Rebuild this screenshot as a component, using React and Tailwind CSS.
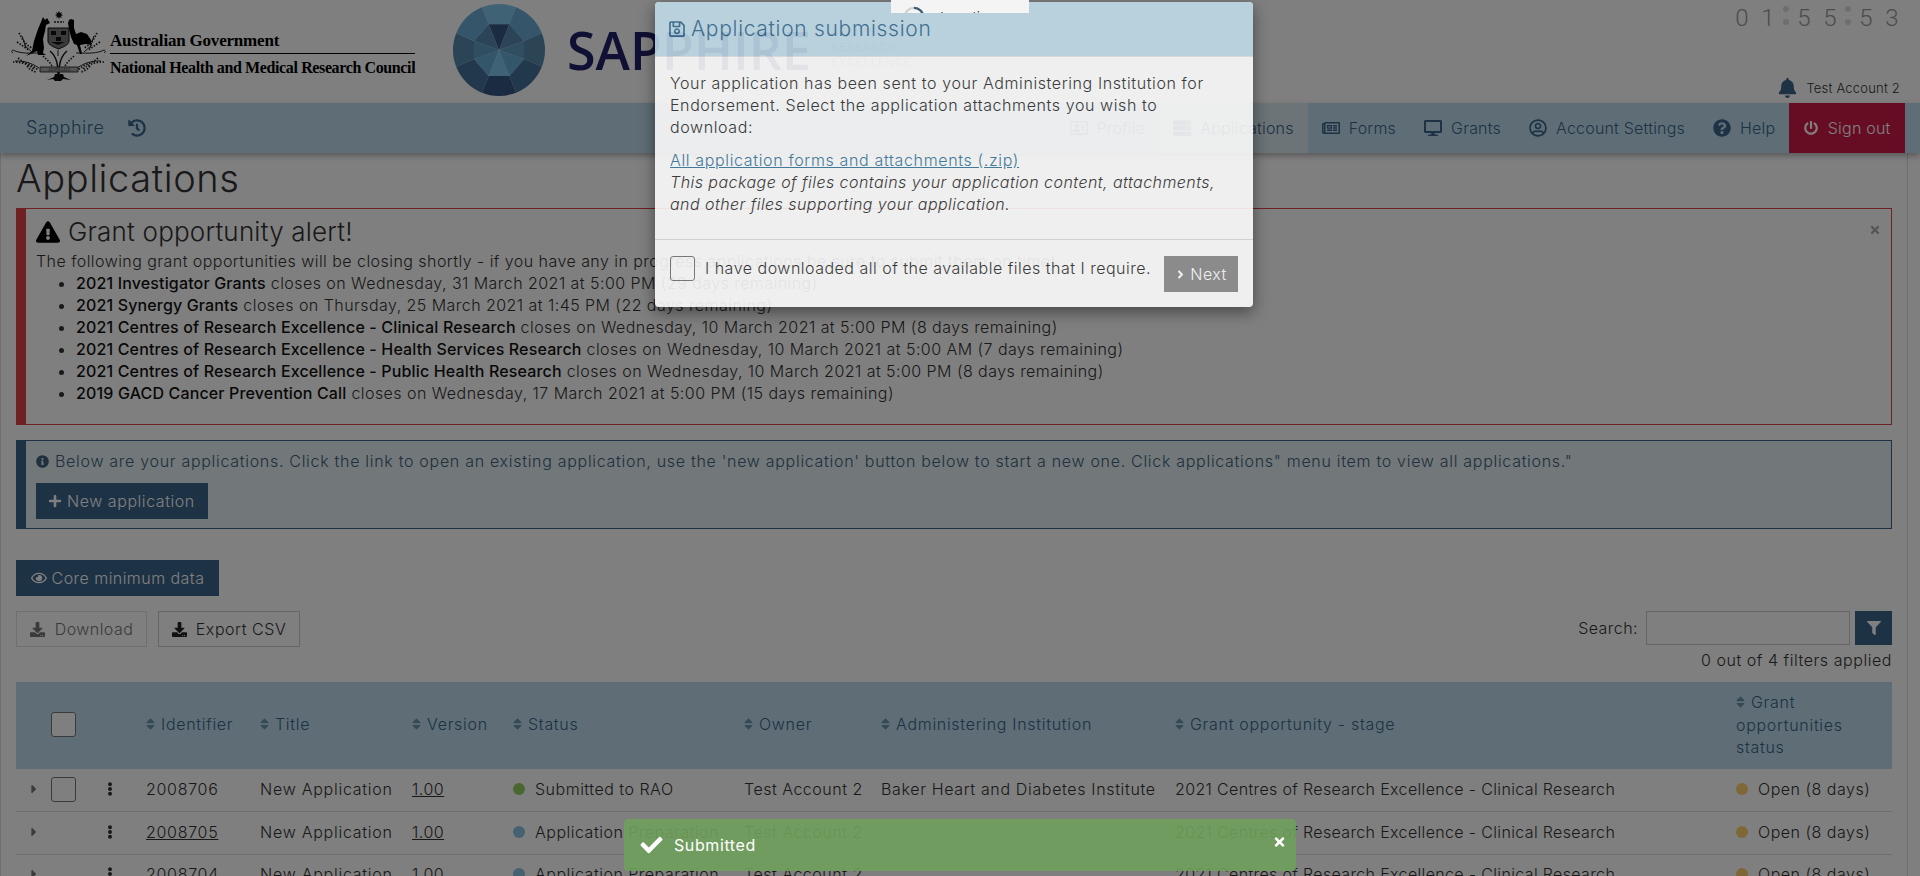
import {
  FaBell, FaCaretRight, FaCheck, FaDesktop, FaDownload, FaEllipsisV, FaExclamationTriangle, FaFilter,
  FaHistory, FaInfoCircle, FaPlus, FaPowerOff, FaQuestionCircle, FaRegAddressCard, FaRegEye,
  FaRegNewspaper, FaRegSave, FaRegUserCircle, FaServer, FaSort, FaTimes, FaAngleRight,
} from 'react-icons/fa'

const navItems = [
  { name: 'Profile', icon: FaRegAddressCard },
  { name: 'Applications', icon: FaServer, active: true },
  { name: 'Forms', icon: FaRegNewspaper },
  { name: 'Grants', icon: FaDesktop },
  { name: 'Account Settings', icon: FaRegUserCircle },
  { name: 'Help', icon: FaQuestionCircle },
]

const closing = [
  ['2021 Investigator Grants', 'closes on Wednesday, 31 March 2021 at 5:00 PM (29 days remaining)'],
  ['2021 Synergy Grants', 'closes on Thursday, 25 March 2021 at 1:45 PM (22 days remaining)'],
  ['2021 Centres of Research Excellence - Clinical Research', 'closes on Wednesday, 10 March 2021 at 5:00 PM (8 days remaining)'],
  ['2021 Centres of Research Excellence - Health Services Research', 'closes on Wednesday, 10 March 2021 at 5:00 AM (7 days remaining)'],
  ['2021 Centres of Research Excellence - Public Health Research', 'closes on Wednesday, 10 March 2021 at 5:00 PM (8 days remaining)'],
  ['2019 GACD Cancer Prevention Call', 'closes on Wednesday, 17 March 2021 at 5:00 PM (15 days remaining)'],
]

const rows = [
  { id: '2008706', check: true, status: 'Submitted to RAO', dot: 'bg-[#92d060]', admin: 'Baker Heart and Diabetes Institute' },
  { id: '2008705', link: true, status: 'Application Preparation', dot: 'bg-[#8cc4e0]' },
  { id: '2008704', link: true, status: 'Application Preparation', dot: 'bg-[#8cc4e0]' },
]

const headers = ['Identifier', 'Title', 'Version', 'Status', 'Owner', 'Administering Institution', 'Grant opportunity - stage']

const gemFacets = [
  ['-10.3,-25.7 10.3,-25.7 20,-50 -20,-50', '#7ec6ea'],
  ['10.3,-25.7 25,-9 50,-20 20,-50', '#6aacd4'],
  ['25,-9 25,9 50,20 50,-20', '#568aae'],
  ['25,9 10.3,26 20,50 50,20', '#447098'],
  ['10.3,26 -10.3,26 -20,50 20,50', '#365684'],
  ['-10.3,26 -25,9 -50,20 -20,50', '#447098'],
  ['-25,9 -25,-9 -50,-20 -50,20', '#568aae'],
  ['-25,-9 -10.3,-25.7 -20,-50 -50,-20', '#6aacd4'],
  ['-10.3,-25.7 10.3,-25.7 0,0', '#365684'],
  ['10.3,-25.7 25,-9 0,0', '#568aae'],
  ['25,-9 25,9 0,0', '#5e9cc0'],
  ['25,9 10.3,26 0,0', '#68acd4'],
  ['10.3,26 -10.3,26 0,0', '#7ec6ea'],
  ['-10.3,26 -25,9 0,0', '#68acd4'],
  ['-25,9 -25,-9 0,0', '#5e9cc0'],
  ['-25,-9 -10.3,-25.7 0,0', '#568aae'],
]

function Crest() {
  return (
    <svg viewBox="8 0 100 100" className="w-[100px] h-[100px] shrink-0">
      {/* kangaroo */}
      <path d="M43 17l2 3 2-2 3 5-4 2-1 6-2 8 1 9-1 5 3 2h-8l-1-4-4 2-7 3 6-5 2-10 4-12 3-7z" fill="#000" />
      {/* emu */}
      <path d="M71 19l3 1 0 8 2 6 5-2 6 2 4 6 0 5-5-1-6 1 2 9h-2l-3-9-3-1-3-7-2-8-1-6 1-3z" fill="#000" />
      {/* star and wreath */}
      <path d="M59 11l1 2 2-1-1 2 2 1-2 1 1 2-2-1-1 2-1-2-2 1 1-2-2-1 2-1-1-2 2 1z" fill="#111" />
      <path d="M54 22h10" stroke="#222" strokeWidth="1.4" strokeDasharray="2 1" />
      {/* shield */}
      <path d="M48 28h21v13c0 4-6 6-10.500 8-4.500-2-10.500-4-10.500-8z" fill="#777" stroke="#111" strokeWidth="1" />
      <path d="M51 31h5v4h-5zM61 31h5v4h-5zM56 37h5v4h-5zM51 42l7 3 7-3" fill="#111" />
      {/* branches */}
      <g fill="none" stroke="#111" strokeWidth="0.9">
        <path d="M13 53c-3-2 0-4 2-2 8 3 18 2 26 2M104 53c3-2 0-4-2-2-8 3-18 2-26 2" />
        <path d="M58 75c0-10-1-18-8-24M59 75c0-10 1-18 8-24" strokeWidth="1.400" />
        <path d="M15 61c8 0 15 1 24 7M101 61c-8 0-15 1-24 7M24 45l8 7M92 45l-8 7M22 36l4 12M94 36l-4 12M58 56v-6" />
      </g>
      <g fill="none" stroke="#222" strokeWidth="1.700" strokeDasharray="1.500 1.500">
        <path d="M19 33c3 5 5 11 13 15M97 33c-3 5-5 11-13 15M17 42c5 3 8 6 12 8M100 42c-5 3-8 6-12 8" />
        <path d="M13 62c7 0 14 1 22 8M104 62c-7 0-14 1-22 8M18 58c7 6 14 6 20 12M98 58c-7 6-14 6-20 12M27 66c3 4 6 5 9 6M90 66c-3 4-6 5-9 6" />
        <path d="M43 56c3 3 6 5 9 10M74 56c-3 3-6 5-9 10" />
      </g>
      {/* motto ribbon */}
      <path d="M40 67h38v5H40z" fill="#aaa" stroke="#111" strokeWidth="0.8" />
      <text x="59" y="71" fontSize="4" textAnchor="middle" fontFamily="Liberation Serif, serif" fill="#111">AUSTRALIA</text>
      <path d="M47 80l7-3 1-3h8l1 3 7 3-8-1-2 2h-6l-2-2z" fill="#111" />
    </svg>
  )
}

function Gem() {
  return (
    <svg viewBox="-46 -46 92 92" className="w-[92px] h-[92px] shrink-0 mt-1">
      <defs>
        <clipPath id="gem-clip"><circle cx="0" cy="0" r="46" /></clipPath>
      </defs>
      <g clipPath="url(#gem-clip)">
        {gemFacets.map(([points, fill]) => (
          <polygon key={points} points={points} fill={fill} />
        ))}
      </g>
    </svg>
  )
}

function Digits({ value }) {
  return value.split('').map((d, i) => (
    <span key={i} className="w-[26px] text-center">{d}</span>
  ))
}

function Colon() {
  return (
    <span className="w-[10px] flex flex-col items-center gap-[7px] pt-[1px]">
      <i className="w-[6px] h-[6px] rounded-full bg-[#ddd]" />
      <i className="w-[6px] h-[6px] rounded-full bg-[#ddd]" />
    </span>
  )
}

function Checkbox() {
  return <div className="w-[25px] h-[25px] rounded-[3px] border border-[#777] bg-white" />
}

function SortHeader({ children }) {
  return (
    <span className="inline-flex items-center gap-[6px]">
      <FaSort className="w-[9px] h-[14px] text-[#6d94ad]" />
      {children}
    </span>
  )
}

export default function App() {
  return (
    <div className="relative h-[876px] overflow-hidden bg-white text-[#333] text-[16px] leading-[22px] tracking-[0.45px] font-light font-['Inter',sans-serif]">
      {/* Top banner */}
      <header className="flex h-[103px] tracking-normal">
        <div className="flex pl-2 gap-[2px]">
          <Crest />
          <div className="w-[305px] pt-[31px] font-['Liberation_Serif',serif] font-bold text-black">
            <div className="text-[17px] leading-[19px] h-[23px] border-b border-black tracking-[-0.2px]">Australian Government</div>
            <div className="text-[16px] leading-[20px] mt-[4px] tracking-[-0.38px] whitespace-nowrap">National Health and Medical Research Council</div>
          </div>
        </div>
        <div className="ml-[38px] flex">
          <Gem />
          <div className="ml-[22px] pt-[18px] text-[52px] leading-[64px] font-semibold text-[#202068] font-['Open_Sans',sans-serif]">SAPPHIRE</div>
          <div className="ml-[20px] pt-[25px] text-[11px] leading-[15px] tracking-[1px] font-normal text-[#8fb0c0]">
            <div>DELIVERING</div>
            <div>RESEARCH</div>
            <div>EXCELLENCE</div>
          </div>
        </div>
        <div className="ml-auto flex flex-col justify-between items-end pr-[20px]">
          <div className="-mr-[5px] pt-[5px] flex text-[24px] leading-[26px] text-[#999] font-['Roboto',sans-serif] font-light">
            <Digits value="01" /><Colon /><Digits value="55" /><Colon /><Digits value="53" />
          </div>
          <div className="flex items-center gap-[9px] pb-[5px] text-[13px] leading-[18px] tracking-[0.2px]">
            <FaBell className="w-[19px] h-[20px] text-[#3a6489]" />
            <span>Test Account 2</span>
          </div>
        </div>
      </header>

      {/* Nav */}
      <nav className="flex items-center h-[50px] bg-[#bedcec] text-[#3a6489] shadow-[0_3px_6px_rgba(0,0,0,0.3)] relative tracking-[0.2px]">
        <span className="ml-[26px] text-[18px] tracking-[0.5px]">Sapphire</span>
        <FaHistory className="ml-[24px] w-[18px] h-[18px]" />
        <div className="ml-auto flex h-full pr-[15px]">
          {navItems.map((item) => (
            <a
              key={item.name}
              className={`flex items-center gap-[9px] px-[14px] ${item.active ? 'bg-[#d8e8ee]' : ''}`}
            >
              <item.icon className="w-[18px] h-[18px]" />
              {item.name}
            </a>
          ))}
          <a className="flex items-center gap-[10px] px-[14.5px] bg-[#ce1a46] text-white">
            <FaPowerOff className="w-[14px] h-[14px]" />
            Sign out
          </a>
        </div>
      </nav>

      {/* Page content */}
      <main className="w-[1908px] border-x border-[#ddd] px-[15px] pt-[5px]">
        <h1 className="text-[38px] leading-[40px] font-light tracking-[0.6px]">Applications</h1>

        <section className="relative mt-[10px] h-[217px] border border-l-[10px] border-[#de4046] pl-[10px] pt-[8px]">
          <h2 className="flex items-center gap-[8px] text-[26px] leading-[30px] font-light tracking-[0.2px]">
            <FaExclamationTriangle className="w-[24px] h-[22px] text-black" />
            Grant opportunity alert!
          </h2>
          <p className="mt-[3px]">The following grant opportunities will be closing shortly - if you have any in progress applications be sure to submit them on time!</p>
          <ul className="list-disc pl-[40px]">
            {closing.map(([name, rest]) => (
              <li key={name}>
                <span className="font-medium text-[#111] tracking-[0.15px]">{name}</span> {rest}
              </li>
            ))}
          </ul>
          <FaTimes className="absolute top-[15px] right-[10px] w-[12px] h-[12px] text-[#aaa]" />
        </section>

        <section className="mt-[15px] h-[89px] border border-l-[10px] border-[#3a6489] bg-[#e4f0f2] pl-[10px] pt-[9px] text-[#40617c] tracking-[0.7px]">
          <p className="flex items-center gap-[6px]">
            <FaInfoCircle className="w-[13px] h-[13px]" />
            Below are your applications. Click the link to open an existing application, use the 'new application' button below to start a new one. Click applications" menu item to view all applications."
          </p>
          <button className="mt-[11px] h-[36px] w-[172px] flex items-center gap-[5px] pl-[12px] bg-[#3a6489] text-white tracking-[0.55px]">
            <FaPlus className="w-[14px] h-[14px]" /> New application
          </button>
        </section>

        <button className="mt-[31px] h-[36px] w-[203px] flex items-center justify-center gap-[5px] bg-[#3a6489] text-white">
          <FaRegEye className="w-[16px] h-[16px]" /> Core minimum data
        </button>

        <div className="mt-[15px] h-[71px] flex justify-between">
          <div className="flex gap-[11px] items-start">
            <button className="h-[36px] w-[131px] flex items-center justify-center gap-[10px] border border-[#e0e0e0] text-[#777]">
              <FaDownload className="w-[15px] h-[15px]" /> Download
            </button>
            <button className="h-[36px] w-[142px] flex items-center justify-center gap-[9px] border border-[#ccc] tracking-[0.55px]">
              <FaDownload className="w-[15px] h-[15px] text-[#222]" /> Export CSV
            </button>
          </div>
          <div className="flex flex-col items-end">
            <div className="flex items-center">
              <span className="mr-[8px]">Search:</span>
              <div className="w-[204px] h-[34px] border border-[#ccc] bg-white" />
              <button className="ml-[5px] w-[37px] h-[34px] flex items-center justify-center bg-[#3a6489] text-white">
                <FaFilter className="w-[14px] h-[14px]" />
              </button>
            </div>
            <span className="mt-[4px] tracking-[0.55px]">0 out of 4 filters applied</span>
          </div>
        </div>

        <table className="w-full table-fixed border-collapse tracking-[0.5px] [&_td]:pb-[2px] [&_th]:pb-[2px]">
          <colgroup>
            <col className="w-[35px]" />
            <col className="w-[49px]" />
            <col className="w-[46px]" />
            <col className="w-[114px]" />
            <col className="w-[152px]" />
            <col className="w-[101px]" />
            <col className="w-[231px]" />
            <col className="w-[137px]" />
            <col className="w-[294px]" />
            <col className="w-[561px]" />
            <col className="w-[156px]" />
          </colgroup>
          <thead>
            <tr className="h-[87px] bg-[#bedcec] text-[#3a6489] text-left tracking-[0.7px]">
              <th />
              <th className="font-light"><Checkbox /></th>
              <th />
              {headers.map((label) => (
                <th key={label} className="font-light"><SortHeader>{label}</SortHeader></th>
              ))}
              <th className="font-light">
                <SortHeader>Grant</SortHeader>
                <br />opportunities
                <br />status
              </th>
            </tr>
          </thead>
          <tbody>
            {rows.map((row) => (
              <tr key={row.id} className="h-[42.6px] border-b border-[#ddd]">
                <td className="pl-[14px]"><FaCaretRight className="w-[8px] h-[14px] text-[#777]" /></td>
                <td>{row.check && <Checkbox />}</td>
                <td className="pl-[4px]"><FaEllipsisV className="w-[12px] h-[14px]" /></td>
                <td className={row.link ? 'underline tracking-[0.7px]' : 'tracking-[0.7px]'}>{row.id}</td>
                <td className="tracking-[0.75px]">New Application</td>
                <td className="underline">1.00</td>
                <td>
                  <span className="flex items-center gap-[10px]">
                    <i className={`w-[12px] h-[12px] rounded-full ${row.dot}`} />
                    {row.status}
                  </span>
                </td>
                <td>Test Account 2</td>
                <td className="whitespace-nowrap tracking-[0.65px]">{row.admin}</td>
                <td className="tracking-[0.35px]">2021 Centres of Research Excellence - Clinical Research</td>
                <td>
                  <span className="flex items-center gap-[10px]">
                    <i className="w-[12px] h-[12px] rounded-full bg-[#ffd070]" />
                    Open (8 days)
                  </span>
                </td>
              </tr>
            ))}
          </tbody>
        </table>
      </main>

      {/* Backdrop */}
      <div className="absolute inset-0 z-40 bg-black/50" />

      {/* Submission modal, caught mid fade */}
      <div className="absolute z-50 left-[655px] top-[2px] w-[598px] h-[305px] rounded-[4px] overflow-hidden bg-white opacity-[.88] shadow-[0_5px_15px_rgba(0,0,0,0.5)]">
        <div className="h-[55px] bg-[#c1ddeb] border-b border-[#e5e5e5] flex items-center gap-[5px] px-[13px] text-[21px] tracking-[0.7px] text-[#3a6f94]">
          <FaRegSave className="w-[18px] h-[18px]" />
          Application submission
        </div>
        <div className="h-[183px] border-b border-[#ddd] px-[15px] pt-[15px]">
          <p className="max-w-[550px] tracking-[0.6px]">Your application has been sent to your Administering Institution for Endorsement. Select the application attachments you wish to download:</p>
          <a className="block mt-[11px] underline text-[#3a7aa0] tracking-[0.65px]">All application forms and attachments (.zip)</a>
          <p className="italic">This package of files contains your application content, attachments, and other files supporting your application.</p>
        </div>
        <div className="flex items-start px-[15px] pt-[16px]">
          <Checkbox />
          <span className="ml-[10px] mt-[1px] whitespace-nowrap tracking-[0.5px]">I have downloaded all of the available files that I require.</span>
          <button className="ml-auto w-[74px] h-[36px] flex items-center justify-center gap-[4px] bg-[#8d8d8d] text-white">
            <FaAngleRight className="w-[11px] h-[13px]" /> Next
          </button>
        </div>
      </div>

      {/* Loading message sliding in behind the top edge */}
      <div className="absolute z-[60] left-[891px] top-0 w-[138px] h-[13px] overflow-hidden bg-[#f4f4f4]">
        <div className="flex items-center gap-[15px] pl-[12px] pt-[5px]">
          <svg viewBox="0 0 24 24" className="w-[22px] h-[22px] shrink-0">
            <circle cx="12" cy="12" r="10" fill="none" stroke="#d0d0d0" strokeWidth="2.500" />
            <path d="M12 2a10 10 0 0 1 10 10" fill="none" stroke="#3a5a74" strokeWidth="2.500" />
          </svg>
          <span className="text-[15px] text-[#333] mt-[2px]">Loading</span>
        </div>
      </div>

      {/* Toast */}
      <div className="absolute z-[60] left-[624px] top-[819px] w-[672px] h-[52px] rounded-[4px] bg-[#70a05c]/90 flex items-center pl-[15px] pr-[10px] text-white">
        <FaCheck className="w-[25px] h-[22px]" />
        <span className="ml-[10px] font-normal tracking-[0.6px]">Submitted</span>
        <FaTimes className="ml-auto mb-[6px] w-[13px] h-[14px]" />
      </div>
    </div>
  )
}
